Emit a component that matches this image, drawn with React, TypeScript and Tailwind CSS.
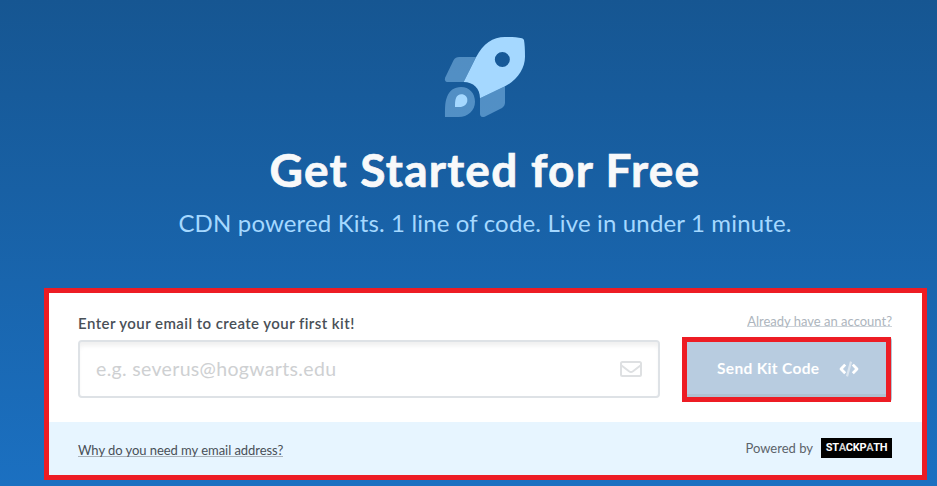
function Rocket() {
  return (
    <svg width="110" height="100" viewBox="0 0 330 300" className="block shrink-0">
      <g fill="#a5d8ff">
        <g opacity=".42">
          <path d="M138 96H88Q76 96 71 105L46 157Q41 171 55 171H101Z" />
          <path d="M225 184V232Q225 243 216 249L164 275Q150 280 150 265V220Z" />
          <path d="M45 276C45 258 44 232 51 216C58 197 73 186 93 186C118 186 135 205 135 230C135 257 113 276 86 276Z" />
        </g>
        <path d="M75 246C75 236 75 226 78 219C81 212 87 208 94 208C105 208 112 216 112 225C112 239 101 246 88 246Z" />
        <path
          fillRule="evenodd"
          d="M101 171L138 97C160 55 188 36 225 36C247 36 262 37 276 40Q281 41 282 46C284 57 285 72 285 95C285 130 262 165 225 184L150 220C150 190 130 171 101 171ZM217 81A22.5 22.5 0 1 0 217 126A22.5 22.5 0 1 0 217 81Z"
        />
      </g>
    </svg>
  );
}

function Envelope() {
  return (
    <svg width="22" height="16" viewBox="0 0 22 16" fill="none" stroke="#dee0e2" strokeWidth="2" className="block">
      <rect x="1" y="1" width="20" height="14" rx="1.5" />
      <path d="M1.5 4.5L9 10.2Q11 11.6 13 10.2L20.5 4.5" />
    </svg>
  );
}

function CodeIcon() {
  return (
    <svg width="20" height="16" viewBox="0 0 20 16" fill="none" strokeWidth="2.8" className="block">
      <path d="M6.2 3.6L2 8L6.2 12.2M13.8 3.6L18 8L13.8 12.2" stroke="#fff" strokeLinejoin="round" />
      <path d="M12 .6L8 15.4" stroke="#dbe5ef" strokeWidth="2.2" />
    </svg>
  );
}

export default function App() {
  return (
    <main className="flex h-[486px] w-[937px] flex-col overflow-hidden bg-linear-to-b from-[#165692] to-[#1b70c1] pl-[44px] font-['Lato','Liberation_Sans',sans-serif]">
      <header className="flex h-[288px] w-[882px] shrink-0 flex-col items-center pt-[25px]">
        <Rocket />
        <h1 className="mt-[16px] h-[58px] whitespace-nowrap text-[46px] leading-[58px] font-bold tracking-[1.25px] text-[#f8f9fa] [-webkit-text-stroke:0.7px_#f8f9fa] [paint-order:stroke_fill] [stroke-linejoin:round]">
          Get Started for Free
        </h1>
        <p className="mt-[8px] whitespace-nowrap text-[24px] leading-[32px] tracking-[0.15px] text-[#a5d8ff]">
          CDN powered Kits. 1 line of code. Live in under 1 minute.
        </p>
      </header>

      <section className="flex h-[192px] w-[883px] shrink-0 flex-col border-[5px] border-[#ed1c24] bg-white">
        <div className="flex h-[129px] shrink-0 pl-[29px]">
          <div className="w-[582px] pt-[19px]">
            <label htmlFor="email" className="block h-[28px] whitespace-nowrap text-[15px] leading-[22px] font-semibold tracking-[0.43px] text-[#495057]">
              Enter your email to create your first kit!
            </label>
            <div className="flex h-[58px] items-center justify-between rounded-[4px] border-2 border-[#dee2e6] pr-[16px] pl-4 shadow-[inset_0_5px_4px_-1px_rgba(0,0,0,0.06)]">
              <input
                id="email"
                placeholder="e.g. severus@hogwarts.edu"
                className="w-[400px] bg-transparent text-[19.5px] tracking-[0.33px] outline-none placeholder:text-[#ced0d2]"
              />
              <Envelope />
            </div>
          </div>
          <div className="ml-[22px] w-[210px] pt-[18px]">
            <div className="flex h-[26px] justify-end">
              <a className="h-[16px] border-b border-[#ced4da] whitespace-nowrap text-[13px] leading-[20px] text-[#adb5bd]">
                Already have an account?
              </a>
            </div>
            <div className="flex h-[65px] w-[210px] items-center rounded-[4px] bg-linear-to-r from-transparent from-[209px] to-[#b4c5d5] to-[209px]">
              <button className="flex h-[65px] w-[209px] items-center border-[5px] border-[#ed1c24] bg-[#b8cce0] pl-[30px] whitespace-nowrap text-white shadow-[inset_0_-3px_0_#afc1d1]">
                <span className="-mt-[2px] w-[122px] text-left text-[15.5px] font-bold tracking-[0.32px]">Send Kit Code</span>
                <span className="-mt-[2px]"><CodeIcon /></span>
              </button>
            </div>
          </div>
        </div>
        <footer className="flex flex-1 items-center justify-between bg-[#e7f5ff] pr-[30px] pl-[29px]">
          <a className="mt-[1px] h-[16px] border-b border-[#a9b2ba] whitespace-nowrap text-[13px] leading-[19px] tracking-[-0.05px] text-[#495057]">
            Why do you need my email address?
          </a>
          <div className="mb-[1px] flex items-center gap-[8px]">
            <span className="mt-[1px] whitespace-nowrap text-[13px] text-[#5c636a]">Powered by</span>
            <span className="flex h-[20px] w-[71px] items-center justify-center bg-black font-['Roboto',sans-serif] text-[11px] font-bold tracking-[-0.3px] text-white">
              <span>ST</span><span className="text-[#cfcfcf]">A</span><span>CKP</span><span className="text-[#cfcfcf]">A</span><span>TH</span>
            </span>
          </div>
        </footer>
      </section>
    </main>
  );
}
